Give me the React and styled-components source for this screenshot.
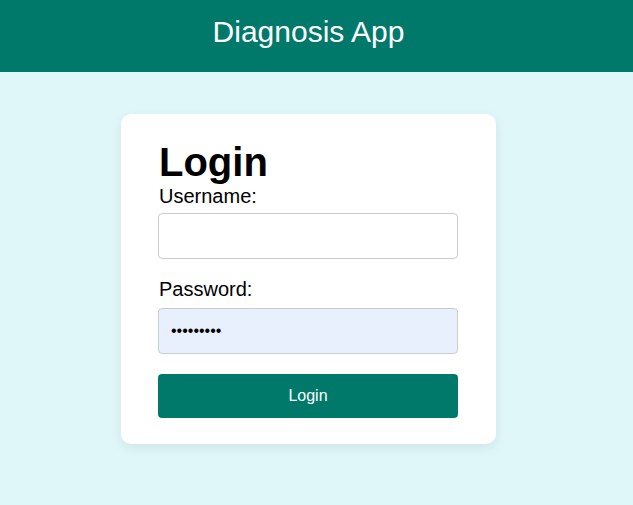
import React from "react";
import styled, { createGlobalStyle } from "styled-components";

const GlobalStyle = createGlobalStyle`
  html, body {
    margin: 0;
    padding: 0;
    background: #e0f7fa;
    font-family: "Liberation Sans", Arial, sans-serif;
  }
  * { box-sizing: border-box; }
`;

const Page = styled.div`
  min-height: 505px;
  background: #e0f7fa;
`;

const Header = styled.header`
  height: 72px;
  background: #00796b;
  display: flex;
  align-items: center;
  justify-content: center;
  padding-right: 16px;
`;

const AppTitle = styled.h1`
  margin: 0 0 8px 0;
  color: #ffffff;
  font-size: 30px;
  font-weight: 400;
`;

const Main = styled.main`
  display: flex;
  justify-content: center;
  padding-top: 42px;
  padding-right: 16px;
`;

const Card = styled.div`
  width: 375px;
  height: 330px;
  background: #ffffff;
  border-radius: 10px;
  box-shadow: 0 4px 12px rgba(0, 0, 0, 0.08);
  padding: 25px 37px 26px 37px;
  display: flex;
  flex-direction: column;
`;

const Heading = styled.h2`
  margin: 0;
  font-size: 40px;
  line-height: 46px;
  font-weight: 700;
  color: #000;
  padding-left: 1px;
`;

const Label = styled.label`
  display: block;
  font-size: 20px;
  line-height: 23px;
  color: #000;
  margin-top: ${(p) => p.$top || 0}px;
  margin-bottom: ${(p) => p.$bottom || 4}px;
  padding-left: 1px;
`;

const Input = styled.input`
  display: block;
  flex: none;
  width: 300px;
  height: 46px;
  border: 1px solid #ccc;
  border-radius: 4px;
  padding: 0 12px;
  font-size: 16px;
  font-family: "Liberation Sans", Arial, sans-serif;
  background: ${(p) => (p.$filled ? "#e8f0fe" : "#ffffff")};
  outline: none;
`;

const Button = styled.button`
  flex: none;
  margin-top: 20px;
  width: 300px;
  height: 44px;
  border: none;
  border-radius: 4px;
  background: #00796b;
  color: #ffffff;
  font-size: 16px;
  font-family: "Liberation Sans", Arial, sans-serif;
  cursor: pointer;
`;

export default function App() {
  return (
    <>
      <GlobalStyle />
      <Page>
        <Header>
          <AppTitle>Diagnosis App</AppTitle>
        </Header>
        <Main>
          <Card>
            <Heading>Login</Heading>
            <Label htmlFor="username" $bottom={5}>Username:</Label>
            <Input id="username" type="text" />
            <Label htmlFor="password" $top={19} $bottom={7}>Password:</Label>
            <Input id="password" type="password" defaultValue="123456789" $filled />
            <Button type="button">Login</Button>
          </Card>
        </Main>
      </Page>
    </>
  );
}
